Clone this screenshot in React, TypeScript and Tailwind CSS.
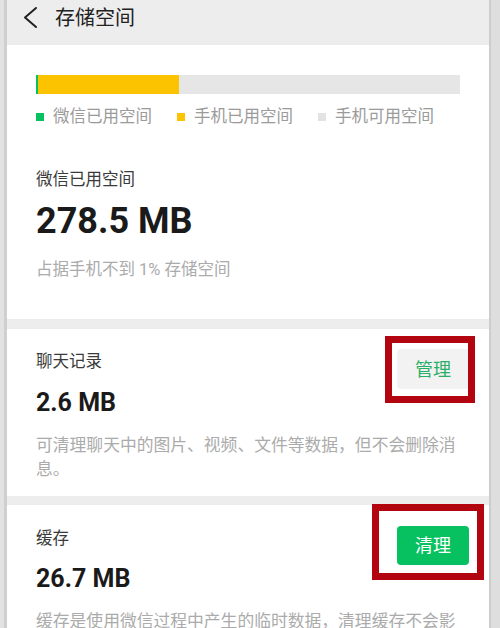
import React from "react";

const font = { fontFamily: 'Roboto, "Noto Sans CJK SC", sans-serif' };

function Legend({ color, label }: { color: string; label: string }) {
  return (
    <div className="flex items-center gap-[9px]">
      <span className={`block w-[8px] h-[8px] ${color}`} />
      <span className="text-[16.5px] leading-[22px] text-[#9b9b9b]">{label}</span>
    </div>
  );
}

export default function App() {
  return (
    <div className="relative w-[500px] h-[628px] overflow-hidden flex bg-white" style={font}>
      {/* left frame */}
      <div className="w-[7px] h-full flex shrink-0">
        <div className="w-[4px] h-full bg-[#e2e2e2]" />
        <div className="w-[3px] h-full bg-[#cfcfcf]" />
      </div>

      {/* main */}
      <div className="flex-1 flex flex-col bg-[#ededed]">
        {/* header */}
        <div className="h-[45px] shrink-0 flex items-center bg-[#ededed]">
          <svg width="48" height="45" viewBox="0 0 48 45" className="shrink-0">
            <polyline points="29,8 18,17.5 29,27" fill="none" stroke="#222" strokeWidth="2" strokeLinecap="round" strokeLinejoin="round" />
          </svg>
          <span className="text-[20px] leading-[26px] text-[#222] -mt-[9px]">存储空间</span>
        </div>

        {/* section 1 */}
        <div className="bg-white pl-[29px] pr-[29px] pt-[30px] pb-[38px]">
          <div className="h-[19px] w-full bg-[#e6e6e6] flex">
            <div className="w-[2px] h-full bg-[#07c160]" />
            <div className="w-[141px] h-full bg-[#fbc300]" />
          </div>
          <div className="mt-[12px] flex gap-[25px]">
            <Legend color="bg-[#07c160]" label="微信已用空间" />
            <Legend color="bg-[#fbc300]" label="手机已用空间" />
            <Legend color="bg-[#e3e3e3]" label="手机可用空间" />
          </div>
          <div className="mt-[41px] text-[16.5px] leading-[22px] text-[#3a3a3a]">微信已用空间</div>
          <div className="mt-[12px] text-[36px] leading-[36px] font-bold text-[#1a1a1a]">278.5 MB</div>
          <div className="mt-[20px] text-[16.5px] leading-[22px] text-[#ababab]">占据手机不到 1% 存储空间</div>
        </div>

        {/* section 2 */}
        <div className="mt-[10px] bg-white pl-[29px] pr-[28px] pt-[20px] pb-[15px]">
          <div className="flex justify-between items-start">
            <div className="pt-[2px]">
              <div className="text-[16.5px] leading-[22px] text-[#3a3a3a]">聊天记录</div>
              <div className="mt-[17px] text-[25px] leading-[25px] font-bold text-[#1a1a1a]">2.6 MB</div>
            </div>
            <div className="-mr-[8px] w-[72px] h-[40px] rounded-[4px] bg-[#f2f2f2] flex items-center justify-center text-[18px] text-[#2aae67]">
              管理
            </div>
          </div>
          <p className="mt-[18px] text-[16.8px] leading-[24px] text-[#ababab]">
            可清理聊天中的图片、视频、文件等数据，但不会删除消息。
          </p>
        </div>

        {/* section 3 */}
        <div className="mt-[9px] flex-1 bg-white pl-[29px] pr-[28px] pt-[21px]">
          <div className="flex justify-between items-start">
            <div className="pt-[2px]">
              <div className="text-[16.5px] leading-[22px] text-[#3a3a3a]">缓存</div>
              <div className="mt-[16px] text-[25px] leading-[25px] font-bold text-[#1a1a1a]">26.7 MB</div>
            </div>
            <div className="-mr-[8px] w-[72px] h-[39px] rounded-[4px] bg-[#07c160] flex items-center justify-center text-[18px] text-white">
              清理
            </div>
          </div>
          <p className="mt-[18px] text-[16.8px] leading-[24px] text-[#ababab]">
            缓存是使用微信过程中产生的临时数据，清理缓存不会影响微信的正常使用。
          </p>
        </div>
      </div>

      {/* right frame */}
      <div className="w-[11px] h-full flex shrink-0">
        <div className="w-[2px] h-full bg-[#cdcdcd]" />
        <div className="flex-1 h-full bg-[#dedede]" />
      </div>

      {/* annotation boxes */}
      <div className="absolute left-[385px] top-[336px] w-[90px] h-[67px] border-[7px] border-[#b3050f]" />
      <div className="absolute left-[372px] top-[504px] w-[112px] h-[76px] border-[7px] border-[#b3050f]" />
    </div>
  );
}
